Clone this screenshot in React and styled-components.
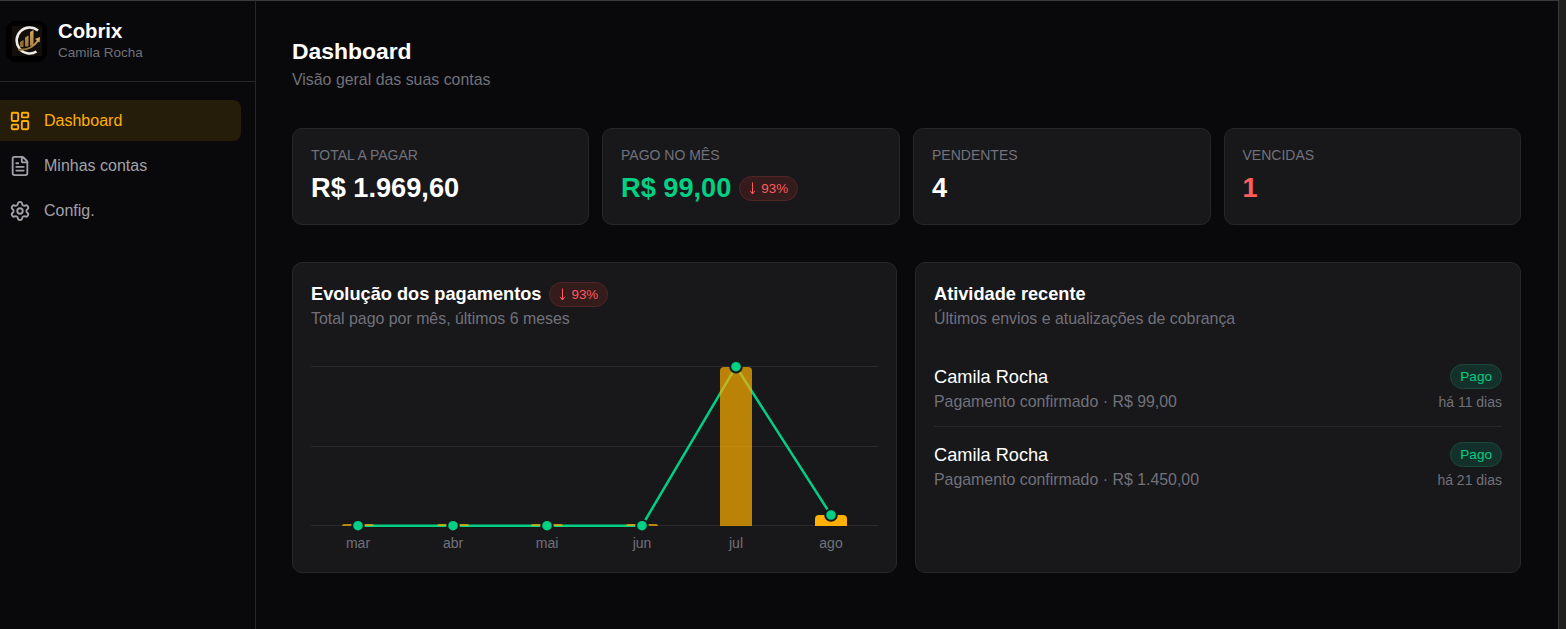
import React from 'react';
import styled, { createGlobalStyle } from 'styled-components';
import { LayoutDashboard, FileText, Settings } from 'lucide-react';

const months = [
  { label: 'mar', x: 47, bar: 2, dim: true },
  { label: 'abr', x: 142, bar: 2, dim: true },
  { label: 'mai', x: 236, bar: 2, dim: true },
  { label: 'jun', x: 331, bar: 2, dim: true },
  { label: 'jul', x: 425, bar: 159, dim: true },
  { label: 'ago', x: 520, bar: 11, dim: false },
];

const dots = [
  { x: 47, y: 164.7 },
  { x: 142, y: 164.7 },
  { x: 236, y: 164.7 },
  { x: 331, y: 164.7 },
  { x: 425, y: 5.7 },
  { x: 520, y: 154 },
];

const activity = [
  { name: 'Camila Rocha', text: 'Pagamento confirmado · R$ 99,00', when: 'há 11 dias' },
  { name: 'Camila Rocha', text: 'Pagamento confirmado · R$ 1.450,00', when: 'há 21 dias' },
];

const barPath = (x, h) => {
  const top = 165 - h;
  const r = Math.min(4, h);
  return `M${x - 16} 165V${top + r}Q${x - 16} ${top} ${x - 16 + r} ${top}H${x + 16 - r}Q${x + 16} ${top} ${x + 16} ${top + r}V165Z`;
};

const Logo = () => (
  <LogoBox>
    <svg width="30" height="30" viewBox="0 0 30 30">
      <defs>
        <linearGradient id="gold" x1="0" y1="1" x2="1" y2="0">
          <stop offset="0" stopColor="#8a6428" />
          <stop offset="1" stopColor="#d8ac62" />
        </linearGradient>
      </defs>
      <rect width="30" height="30" fill="#120f0a" />
      <path d="M26 4.5A13 13 0 1 0 24.5 25.5" fill="none" stroke="#eeece6" strokeWidth="2.6" />
      <path d="M8 21v-5l3.5-2v7zM13 20.5v-9l3.5-2v11zM18 20v-14l3.5-2v15z" fill="url(#gold)" />
      <path d="M6 23.500c8 1 15-1.500 20-9" fill="none" stroke="url(#gold)" strokeWidth="1.800" />
      <path d="M23 13l5-2-.5 5.500z" fill="#d8ac62" />
    </svg>
  </LogoBox>
);

const Trend = () => (
  <TrendBadge>
    <svg width="7" height="13" viewBox="0 0 7 13" fill="none" stroke="currentColor">
      <path d="M3.500 0.500V12M1.200 8.800L3.500 12L5.800 8.800" />
    </svg>
    93%
  </TrendBadge>
);

export default function App() {
  return (
    <>
      <Global />
      <Page>
        <Sidebar>
          <Brand>
            <Logo />
            <div>
              <BrandName>Cobrix</BrandName>
              <BrandUser>Camila Rocha</BrandUser>
            </div>
          </Brand>
          <Nav>
            <NavItem $active>
              <LayoutDashboard size={22} strokeWidth={2} />
              Dashboard
            </NavItem>
            <NavItem>
              <FileText size={22} strokeWidth={2} />
              Minhas contas
            </NavItem>
            <NavItem>
              <Settings size={22} strokeWidth={2} />
              Config.
            </NavItem>
          </Nav>
        </Sidebar>
        <Main>
          <Title>Dashboard</Title>
          <Subtitle>Visão geral das suas contas</Subtitle>
          <Stats>
            <StatCard>
              <StatLabel>TOTAL A PAGAR</StatLabel>
              <StatValue>R$ 1.969,60</StatValue>
            </StatCard>
            <StatCard>
              <StatLabel>PAGO NO MÊS</StatLabel>
              <StatRow>
                <StatValue $color="#00d084">R$ 99,00</StatValue>
                <Trend />
              </StatRow>
            </StatCard>
            <StatCard>
              <StatLabel>PENDENTES</StatLabel>
              <StatValue>4</StatValue>
            </StatCard>
            <StatCard>
              <StatLabel>VENCIDAS</StatLabel>
              <StatValue $color="#ff5c5c">1</StatValue>
            </StatCard>
          </Stats>
          <Panels>
            <Panel>
              <PanelHead>
                <PanelTitle>Evolução dos pagamentos</PanelTitle>
                <Trend />
              </PanelHead>
              <PanelSub>Total pago por mês, últimos 6 meses</PanelSub>
              <Chart width="567" height="192" viewBox="0 0 567 192">
                {[5.5, 85.5, 164.5].map((y) => (
                  <line key={y} x1="0" x2="567" y1={y} y2={y} stroke="#2a2a2d" />
                ))}
                <polyline
                  points={dots.map((d) => `${d.x},${d.y}`).join(' ')}
                  fill="none"
                  stroke="#00d084"
                  strokeWidth="2.5"
                />
                {months.map((m) => (
                  <path key={m.label} d={barPath(m.x, m.bar)} fill="#ffb000" fillOpacity={m.dim ? 0.7 : 1} />
                ))}
                {dots.map((d) => (
                  <circle key={d.x} cx={d.x} cy={d.y} r="5.8" fill="#00d084" stroke="#18181b" strokeWidth="2" />
                ))}
                {months.map((m) => (
                  <ChartLabel key={m.label} x={m.x} y="187" textAnchor="middle">
                    {m.label}
                  </ChartLabel>
                ))}
              </Chart>
            </Panel>
            <Panel>
              <PanelHead>
                <PanelTitle>Atividade recente</PanelTitle>
              </PanelHead>
              <PanelSub>Últimos envios e atualizações de cobrança</PanelSub>
              <ActivityList>
                {activity.map((a) => (
                  <ActivityRow key={a.when}>
                    <ActivityInfo>
                      <ActivityName>{a.name}</ActivityName>
                      <ActivityText>{a.text}</ActivityText>
                    </ActivityInfo>
                    <ActivityMeta>
                      <Status>Pago</Status>
                      <When>{a.when}</When>
                    </ActivityMeta>
                  </ActivityRow>
                ))}
              </ActivityList>
            </Panel>
          </Panels>
        </Main>
        <ScrollStrip />
      </Page>
    </>
  );
}

const Global = createGlobalStyle`
  html, body {
    margin: 0;
    height: 100%;
    background: #09090b;
    overflow: hidden;
  }
  body {
    font-family: "Liberation Sans", Arial, sans-serif;
  }
`;

const Page = styled.div`
  display: flex;
  height: 629px;
  background: #09090b;
`;

const ScrollStrip = styled.div`
  width: 8px;
  flex-shrink: 0;
  background: #20201e;
  border-left: 1px solid #3c3c3c;
  box-sizing: border-box;
`;

const Sidebar = styled.aside`
  width: 256px;
  flex-shrink: 0;
  border-top: 1px solid #3a3a3c;
  border-right: 1px solid #27272a;
  box-sizing: border-box;
`;

const Brand = styled.div`
  display: flex;
  align-items: center;
  gap: 11px;
  height: 81px;
  padding: 0 6px;
  border-bottom: 1px solid #27272a;
  box-sizing: border-box;
`;

const LogoBox = styled.div`
  width: 41px;
  height: 41px;
  display: flex;
  align-items: center;
  justify-content: center;
  background: #000;
  border-radius: 9px;
`;

const BrandName = styled.div`
  color: #fff;
  font-size: 20.3px;
  font-weight: 700;
  line-height: 23px;
`;

const BrandUser = styled.div`
  color: #71717a;
  font-size: 13.5px;
  line-height: 20px;
`;

const Nav = styled.nav`
  display: flex;
  flex-direction: column;
  gap: 4px;
  padding: 18px 14px 0 0;
`;

const NavItem = styled.div`
  display: flex;
  align-items: center;
  gap: 13px;
  height: 41px;
  padding-left: 9px;
  border-radius: 0 8px 8px 0;
  font-size: 16px;
  color: ${({ $active }) => ($active ? '#ffb000' : '#a1a1aa')};
  background: ${({ $active }) => ($active ? '#261c0a' : 'transparent')};
`;

const Main = styled.main`
  flex: 1;
  padding: 37px 37px 0 36px;
  min-width: 0;
  border-top: 1px solid #3a3a3c;
`;

const Title = styled.h1`
  margin: 0;
  color: #fff;
  font-size: 22.9px;
  font-weight: 700;
  line-height: 27px;
`;

const Subtitle = styled.p`
  margin: 5px 0 0;
  color: #71717a;
  font-size: 15.9px;
  line-height: 20px;
`;

const Stats = styled.div`
  display: grid;
  grid-template-columns: 297px 298px 297.5px 1fr;
  gap: 13px;
  margin-top: 38px;
`;

const StatCard = styled.div`
  height: 97px;
  padding: 18px 18px 0;
  background: #18181b;
  border: 1px solid #27272a;
  border-radius: 10px;
  box-sizing: border-box;
`;

const StatLabel = styled.div`
  color: #71717a;
  font-size: 14px;
  line-height: 17px;
`;

const StatRow = styled.div`
  display: flex;
  align-items: center;
  gap: 8px;
`;

const StatValue = styled.div`
  margin-top: 6px;
  color: ${({ $color }) => $color || '#fff'};
  font-size: 27.2px;
  font-weight: 700;
  line-height: 35px;
`;

const TrendBadge = styled.span`
  display: inline-flex;
  align-items: center;
  gap: 5px;
  height: 25px;
  margin-top: 8px;
  padding: 0 9px;
  color: #ff5a5f;
  font-size: 13.4px;
  background: #341b1c;
  border: 1px solid #522526;
  border-radius: 999px;
  box-sizing: border-box;
`;

const Panels = styled.div`
  display: grid;
  grid-template-columns: 605px 1fr;
  gap: 18px;
  margin-top: 37px;
`;

const Panel = styled.section`
  height: 311px;
  padding: 18px 18px 0;
  background: #18181b;
  border: 1px solid #27272a;
  border-radius: 10px;
  box-sizing: border-box;
`;

const PanelHead = styled.div`
  display: flex;
  align-items: center;
  gap: 8px;
  height: 26px;
  ${TrendBadge} {
    margin-top: 0;
  }
`;

const PanelTitle = styled.h2`
  margin: 0;
  color: #fff;
  font-size: 18.2px;
  font-weight: 700;
`;

const PanelSub = styled.p`
  margin: 1px 0 0;
  color: #71717a;
  font-size: 15.9px;
  line-height: 22px;
`;

const Chart = styled.svg`
  display: block;
  margin-top: 31px;
`;

const ChartLabel = styled.text`
  fill: #71717a;
  font-size: 14px;
`;

const ActivityList = styled.div`
  margin-top: 18px;
`;

const ActivityRow = styled.div`
  display: flex;
  justify-content: space-between;
  align-items: center;
  height: 78px;
  box-sizing: border-box;
  & + & {
    border-top: 1px solid #27272a;
  }
`;

const ActivityInfo = styled.div`
  padding-top: 4px;
`;

const ActivityName = styled.div`
  color: #fff;
  font-size: 18.2px;
  line-height: 24px;
`;

const ActivityText = styled.div`
  color: #71717a;
  font-size: 15.9px;
  line-height: 25px;
`;

const ActivityMeta = styled.div`
  display: flex;
  flex-direction: column;
  align-items: flex-end;
  gap: 4px;
`;

const Status = styled.span`
  height: 25px;
  padding: 0 9px;
  color: #00d084;
  font-size: 13.6px;
  line-height: 23px;
  background: #14302a;
  border: 1px solid #1a4a38;
  border-radius: 999px;
  box-sizing: border-box;
`;

const When = styled.span`
  color: #71717a;
  font-size: 14px;
  line-height: 18px;
`;
